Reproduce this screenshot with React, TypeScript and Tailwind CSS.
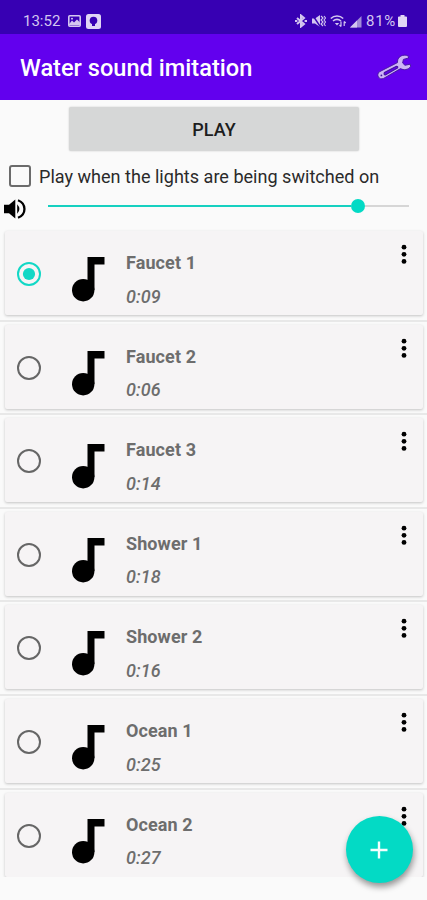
import React from "react";

const sounds = [
  { name: "Faucet 1", time: "0:09" },
  { name: "Faucet 2", time: "0:06" },
  { name: "Faucet 3", time: "0:14" },
  { name: "Shower 1", time: "0:18" },
  { name: "Shower 2", time: "0:16" },
  { name: "Ocean 1", time: "0:25" },
  { name: "Ocean 2", time: "0:27" },
];

function StatusBar() {
  return (
    <div className="flex h-[34px] shrink-0 items-center bg-[#3700b3] pl-[23px] pr-[20px] pt-[8px] text-[15px] leading-none text-[#d3c6f0]">
      <span className="w-[45px] whitespace-nowrap">13:52</span>
      <svg className="mb-[1px] h-[12px] w-[13px]" viewBox="0 0 13 13" preserveAspectRatio="none">
        <rect x="0.8" y="0.8" width="11.4" height="11.4" rx="1" fill="none" stroke="currentColor" strokeWidth="1.6" />
        <path d="M1 10 L4 6 L6 8 L9 5 L12 8 V11 H1Z" fill="currentColor" />
        <circle cx="4" cy="4" r="1" fill="currentColor" />
      </svg>
      <svg className="ml-[5px] h-[15px] w-[15px]" viewBox="0 0 15 15">
        <rect width="15" height="15" rx="2.5" fill="#e0d5f5" />
        <circle cx="7.5" cy="6.6" r="3.8" fill="#3700b3" />
        <path d="M6 9h3v3H6z" fill="#3700b3" />
      </svg>
      <div className="ml-auto flex items-center">
        <svg className="h-[14px] w-[12px]" viewBox="0 0 12 14" fill="none" stroke="currentColor" strokeWidth="2">
          <path d="M2 4 L9 10 L6 12.5 V1.5 L9 4 L2 10" />
          <path d="M0 7h2.4M9.6 7h2.4" strokeWidth="2.2" />
        </svg>
        <svg className="ml-[5px] h-[14px] w-[14px]" viewBox="0 0 14 14" fill="none" stroke="currentColor" strokeWidth="1.4">
          <path d="M0 4.5h3l5-3.5v12L3 9.5H0z" fill="currentColor" stroke="none" />
          <path d="M0.5 1l8 12" stroke="#3700b3" />
          <path d="M9 2l2 2-2 2 2 2-2 2 2 2M12 2l1.5 2L12 6l1.5 2L12 10l1.5 2" strokeWidth="1.1" />
        </svg>
        <svg className="ml-[4px] h-[14px] w-[17px]" viewBox="0 0 17 14" fill="none" stroke="currentColor" strokeWidth="1.6">
          <path d="M0.8 4.5C4.2 1.2 9.8 1.2 13.2 4.5M3 7c2.4-2 5.6-2 8 0" />
          <path d="M4.8 9h4.4L7 11.5z" fill="currentColor" stroke="none" />
          <path d="M11 7.5v5m-1.5-1.5L11 12.6M14.2 12V7.5m1.5 1.5L14.2 7.4" strokeWidth="1.2" />
        </svg>
        <svg className="ml-[3px] h-[13px] w-[12px]" viewBox="0 0 12 13">
          <path d="M0 12.5L11.5 1v11.5z" fill="#a18bd8" />
          <path d="M0 12.5L7 5.5v7z" fill="currentColor" />
        </svg>
        <span className="ml-[4px] w-[32px] whitespace-nowrap tracking-[0.7px]">81%</span>
        <svg className="h-[12px] w-[9px]" viewBox="0 0 9 13" preserveAspectRatio="none">
          <path d="M2.5 0h4v1.5H8q1 0 1 1V12q0 1-1 1H1q-1 0-1-1V2.5q0-1 1-1h1.5z" fill="#e0d5f5" />
        </svg>
      </div>
    </div>
  );
}

function Wrench() {
  return (
    <svg className="h-[28px] w-[36px]" viewBox="0 0 36 28">
      <path
        d="M3.4 18.8L21.5 9.6C21.2 5 24.5 1.6 30.2 2.2L32.8 3.5L32.4 5L27.4 6.4L26.6 10L29 12.3L34.2 11.2L34.6 13.4C32.4 17 27.5 17.4 24.6 15.6L7.6 25.4C3 27.6 -.2 21.6 3.4 18.8Z"
        fill="#cdb4f6"
        stroke="#42129c"
        strokeWidth="0.9"
      />
      <path d="M8.4 19.6L20.4 13.2Q22.2 13.2 21.6 15L9.4 22Q7.4 21.6 8.4 19.6Z" fill="#6200ee" stroke="#42129c" strokeWidth="1.1" />
      <circle cx="5.4" cy="22.4" r="0.9" fill="#42129c" />
    </svg>
  );
}

function SoundRow({ name, time, selected }: { name: string; time: string; selected: boolean }) {
  return (
    <li className="flex h-[93.6px] shrink-0 flex-col border-b-2 border-[#e8e8e8] pl-[5px] pr-[4px] pt-[3px]">
      <div className="flex h-[84px] rounded-[2px] bg-[#f6f4f5] shadow-[0_1px_3px_rgba(0,0,0,0.22)]">
        <svg className="ml-[11px] mt-[30px] h-[26px] w-[26px] shrink-0" viewBox="0 0 26 26" fill="none">
          <circle cx="13" cy="13" r="11" stroke={selected ? "#12d8c6" : "#666"} strokeWidth="2" />
          {selected && <circle cx="13" cy="13" r="6.1" fill="#12d8c6" />}
        </svg>
        <svg className="ml-[29px] mt-[25px] h-[46px] w-[34px] shrink-0" viewBox="0 0 34 46">
          <circle cx="12.2" cy="34.2" r="11.2" />
          <path d="M16.5 1H33.5v7.5H23.5V34H16.5z" />
        </svg>
        <div className="ml-[21px] flex grow flex-col pt-[21px] text-[#6d6d6d]">
          <span className="h-[33.6px] text-[18px] font-bold leading-[22px] tracking-[0.1px]">{name}</span>
          <span className="text-[18px] font-medium italic leading-[22px] tracking-[0.1px]">{time}</span>
        </div>
        <svg className="mr-[15px] mt-[13px] h-[22px] w-[8px]" viewBox="0 0 8 22">
          <circle cx="4" cy="3.2" r="2.4" />
          <circle cx="4" cy="10.3" r="2.4" />
          <circle cx="4" cy="17.4" r="2.4" />
        </svg>
      </div>
    </li>
  );
}

export default function App() {
  return (
    <main className="relative flex h-[900px] w-[427px] flex-col overflow-hidden bg-[#fafafa] font-[Roboto,sans-serif]">
      <StatusBar />
      <header className="flex h-[66px] shrink-0 items-center justify-between bg-[#6200ee] pl-[20px] pr-[15px]">
        <h1 className="whitespace-nowrap pt-[4px] text-[23.6px] font-medium leading-none text-white">Water sound imitation</h1>
        <Wrench />
      </header>
      <button className="ml-[69px] mt-[7px] h-[44px] w-[290px] shrink-0 rounded-[2px] bg-[#d6d7d7] pt-[1px] text-[18px] font-medium leading-none text-[#1d1d1d] shadow-[0_0_2px_rgba(0,0,0,0.2)]">
        PLAY
      </button>
      <label className="flex h-[42px] shrink-0 items-center pl-[9px] pt-[8px]">
        <span className="h-[22px] w-[22px] shrink-0 rounded-[3px] border-2 border-[#6b6b6b]" />
        <span className="ml-[8px] whitespace-nowrap pt-[2px] text-[18.07px] leading-[22px] text-[#2a2a2a]">Play when the lights are being switched on</span>
      </label>
      <div className="flex h-[35px] shrink-0 pl-[4px]">
        <svg className="mt-[5px] h-[22px] w-[22px]" viewBox="0 0 22 22">
          <path d="M0 6.8h5L11.3 1.5v19L5 15.2H0z" />
          <path d="M13.2 6.2q4.4 4.8 0 9.6z" />
          <path d="M14 2.2C22.6 5.6 22.6 16.4 14 19.8" fill="none" stroke="#000" strokeWidth="2.3" />
        </svg>
        <div className="ml-[22px] mt-[6px] flex h-[14px] w-[361px] items-center">
          <div className="h-[2.5px] w-[303px] bg-[#16d0c0]" />
          <div className="h-[14px] w-[14px] rounded-full bg-[#03dac5]" />
          <div className="h-[2px] grow bg-[#d6d6d6]" />
        </div>
      </div>
      <ul className="flex h-[649px] shrink-0 flex-col overflow-hidden">
        {sounds.map((s, i) => (
          <SoundRow key={s.name} name={s.name} time={s.time} selected={i === 0} />
        ))}
      </ul>
      <button className="absolute left-[345.5px] top-[816px] flex h-[67px] w-[67px] items-center justify-center rounded-full bg-[#03dac5] shadow-[1px_4px_6px_rgba(0,0,0,0.4)]">
        <svg className="h-[18px] w-[18px]" viewBox="0 0 18 18" stroke="#f2fffd" strokeWidth="2.4">
          <path d="M9 0.5v17M0.5 9h17" />
        </svg>
      </button>
    </main>
  );
}
